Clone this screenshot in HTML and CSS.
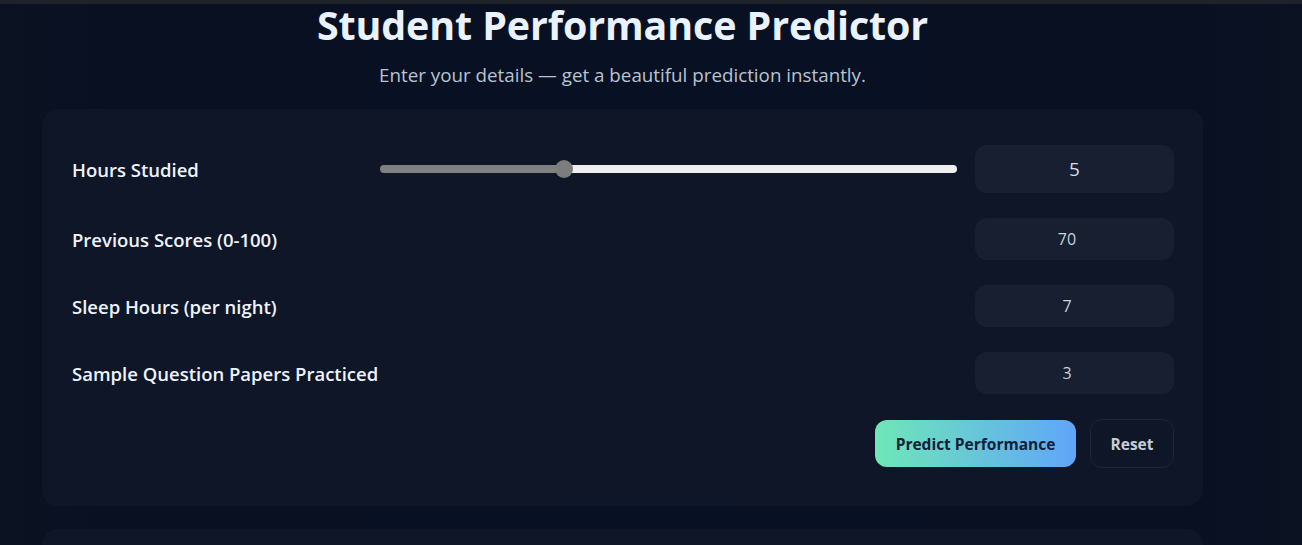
FILE: index.html
```html
<!DOCTYPE html>
<html lang="en">
<head>
<meta charset="utf-8">
<title>Student Performance Predictor</title>
<link rel="stylesheet" href="styles.css">
</head>
<body>
<div class="topbar"></div>
<main class="page">
  <header class="hero">
    <h1 class="title">Student Performance Predictor</h1>
    <p class="subtitle">Enter your details — get a beautiful prediction instantly.</p>
  </header>
  <section class="card form-card">
    <div class="row row-slider">
      <label class="label" for="hours">Hours Studied</label>
      <input class="slider" id="hours" type="range" min="0" max="16" value="5">
      <div class="value-box">5</div>
    </div>
    <div class="row">
      <label class="label" for="prev">Previous Scores (0-100)</label>
      <input class="num" id="prev" type="number" value="70">
    </div>
    <div class="row">
      <label class="label" for="sleep">Sleep Hours (per night)</label>
      <input class="num" id="sleep" type="number" value="7">
    </div>
    <div class="row">
      <label class="label" for="papers">Sample Question Papers Practiced</label>
      <input class="num" id="papers" type="number" value="3">
    </div>
    <div class="actions">
      <button class="btn btn-primary" type="button">Predict Performance</button>
      <button class="btn btn-ghost" type="button">Reset</button>
    </div>
  </section>
  <section class="card result-card"></section>
</main>
</body>
</html>
```
FILE: styles.css
```css
* { box-sizing: border-box; }
html, body { height: 100%; }
body {
  margin: 0;
  background: linear-gradient(90deg, #0b1322 0%, #081022 8%, #081023 50%, #081022 92%, #0b1322 100%);
  font-family: "Open Sans", "Noto Sans", sans-serif;
  color: #e8eef8;
  overflow: hidden;
}
.topbar { height: 4px; background: #1e2329; }
.page {
  width: 1161px;
  margin-left: 42px;
}
.hero { text-align: center; }
.title {
  margin: -2px 0 0;
  font-size: 39.4px;
  line-height: 46px;
  font-weight: 700;
  color: #eaf2fd;
  letter-spacing: -0.1px;
}
.subtitle {
  margin: 15px 0 0;
  font-size: 18.8px;
  line-height: 24px;
  color: #b9c3d1;
}
.card {
  background: #0e1628;
  border-radius: 16px;
}
.form-card {
  margin-top: 22px;
  padding: 36px 29px 38px 30px;
  display: flex;
  flex-direction: column;
  gap: 25px;
}
.row {
  display: flex;
  align-items: center;
  height: 42px;
}
.row-slider { height: 48px; }
.label {
  flex: 1;
  font-size: 18.5px;
  font-weight: 600;
  color: #eef3fb;
}
.row-slider .label { flex: 0 0 308px; }
.slider {
  -webkit-appearance: none;
  appearance: none;
  flex: 1;
  margin: 0 18px 0 0;
  height: 8px;
  border-radius: 4px;
  background: linear-gradient(90deg, #808080 0%, #808080 32%, #efefef 32%, #efefef 100%);
  outline: none;
}
.slider::-webkit-slider-thumb {
  -webkit-appearance: none;
  appearance: none;
  width: 18px;
  height: 18px;
  border-radius: 50%;
  background: #7d7d7d;
  border: none;
}
.value-box {
  flex: 0 0 199px;
  height: 48px;
  border-radius: 12px;
  background: #171f30;
  display: flex;
  align-items: center;
  justify-content: center;
  font-size: 19px;
  color: #d5dde8;
}
.num {
  width: 199px;
  height: 42px;
  border: none;
  border-radius: 12px;
  background: #171f30;
  color: #c9d2df;
  font-family: inherit;
  font-size: 16px;
  text-align: center;
  padding: 0 4px;
  outline: none;
}
.actions {
  display: flex;
  justify-content: flex-end;
  align-items: center;
  gap: 14px;
}
.btn {
  font-family: inherit;
  font-size: 15.5px;
  font-weight: 700;
  border-radius: 12px;
  cursor: pointer;
}
.btn-primary {
  width: 201px;
  height: 47px;
  border: none;
  color: #10213a;
  background: linear-gradient(90deg, #6ee7b7 0%, #60a5fa 100%);
}
.btn-ghost {
  width: 84px;
  height: 49px;
  background: transparent;
  border: 1px solid #1c2436;
  color: #c8ccd4;
}
.result-card {
  margin-top: 23px;
  height: 60px;
}
```
